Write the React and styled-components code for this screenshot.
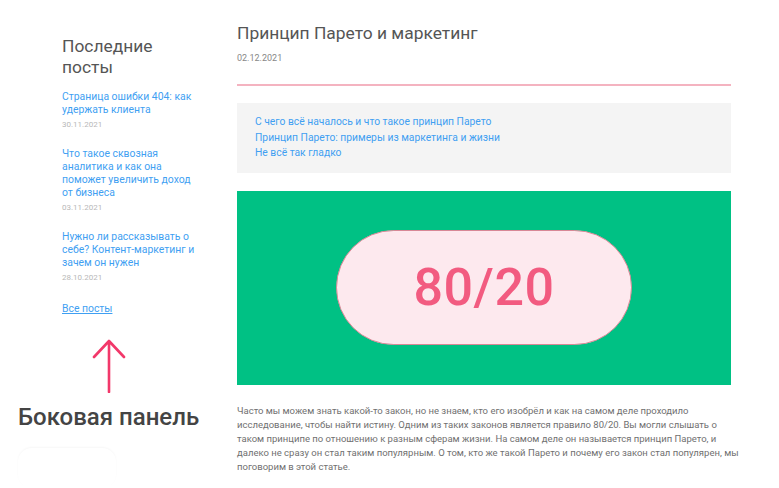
import React from "react";
import styled, { createGlobalStyle } from "styled-components";

const Global = createGlobalStyle`
  html, body { margin: 0; padding: 0; background: #fff; }
  body { font-family: Roboto, "Noto Sans", "Liberation Sans", sans-serif; }
  * { box-sizing: border-box; }
`;

const Page = styled.div`
  display: flex;
  width: 779px;
  height: 488px;
  overflow: hidden;
`;

const LeftColumn = styled.aside`
  width: 237px;
  flex-shrink: 0;
  display: flex;
  flex-direction: column;
`;

const Widget = styled.div`
  margin-left: 62px;
  width: 139px;
  padding-top: 36px;
  display: flex;
  flex-direction: column;
`;

const WidgetTitle = styled.h3`
  margin: 0 0 12px;
  font-size: 17.4px;
  line-height: 21px;
  font-weight: 400;
  color: #555;
`;

const PostList = styled.ul`
  list-style: none;
  margin: 0;
  padding: 0;
  display: flex;
  flex-direction: column;
  gap: 16px;
`;

const PostItem = styled.li`
  display: flex;
  flex-direction: column;
`;

const PostLink = styled.a`
  font-size: 10.4px;
  line-height: 13px;
  color: #3f9ff2;
  text-decoration: none;
`;

const PostDate = styled.span`
  margin-top: 3px;
  font-size: 8px;
  line-height: 12px;
  color: #b8b8b8;
`;

const AllPosts = styled.a`
  margin-top: 18px;
  font-size: 10.4px;
  line-height: 13px;
  color: #3f9ff2;
  text-decoration: underline;
`;

const Annotation = styled.div`
  margin-top: 24px;
  display: flex;
  flex-direction: column;
  padding-left: 18px;
`;

const ArrowIcon = styled.svg`
  margin-left: 74px;
  display: block;
`;

const AnnotationLabel = styled.div`
  margin-top: 10px;
  font-size: 24px;
  line-height: 28px;
  font-weight: 500;
  color: #444;
  white-space: nowrap;
`;

const FaintCard = styled.div`
  margin-top: 17px;
  width: 98px;
  height: 40px;
  border-radius: 14px;
  box-shadow: 0 -1px 2px rgba(0, 0, 0, 0.035);
`;

const Main = styled.main`
  width: 494px;
  padding-top: 21px;
  display: flex;
  flex-direction: column;
`;

const ArticleTitle = styled.h1`
  margin: 0;
  font-size: 17.4px;
  line-height: 24px;
  font-weight: 400;
  color: #555;
`;

const ArticleDate = styled.div`
  margin-top: 7px;
  font-size: 9px;
  line-height: 12px;
  color: #888;
`;

const Divider = styled.hr`
  margin: 20px 0 0;
  border: none;
  height: 2px;
  background: #f4b3c0;
`;

const Toc = styled.nav`
  margin-top: 17px;
  background: #f4f4f4;
  padding: 11px 18px 12px;
  display: flex;
  flex-direction: column;
`;

const TocLink = styled.a`
  font-size: 10.3px;
  line-height: 15.5px;
  color: #3f9ff2;
  text-decoration: none;
`;

const Banner = styled.div`
  margin-top: 18px;
  height: 194px;
  background: #00c184;
  display: flex;
  align-items: center;
  justify-content: center;
`;

const Pill = styled.div`
  width: 296px;
  height: 115px;
  border-radius: 58px;
  background: #fde9ee;
  border: 1px solid #d88896;
  display: flex;
  align-items: center;
  justify-content: center;
  font-size: 52px;
  font-weight: 500;
  color: #f25b80;
  letter-spacing: 0.5px;
`;

const Paragraph = styled.p`
  margin: 19px 0 0;
  font-size: 9.5px;
  line-height: 14px;
  color: #707070;
  white-space: nowrap;
`;

const posts = [
  { title: "Страница ошибки 404: как удержать клиента", date: "30.11.2021" },
  {
    title: "Что такое сквозная аналитика и как она поможет увеличить доход от бизнеса",
    date: "03.11.2021",
  },
  {
    title: "Нужно ли рассказывать о себе? Контент-маркетинг и зачем он нужен",
    date: "28.10.2021",
  },
];

const toc = [
  "С чего всё началось и что такое принцип Парето",
  "Принцип Парето: примеры из маркетинга и жизни",
  "Не всё так гладко",
];

const paragraphLines = [
  "Часто мы можем знать какой-то закон, но не знаем, кто его изобрёл и как на самом деле проходило",
  "исследование, чтобы найти истину. Одним из таких законов является правило 80/20. Вы могли слышать о",
  "таком принципе по отношению к разным сферам жизни. На самом деле он называется принцип Парето, и",
  "далеко не сразу он стал таким популярным. О том, кто же такой Парето и почему его закон стал популярен, мы",
  "поговорим в этой статье.",
];

export default function App() {
  return (
    <>
      <Global />
      <Page>
        <LeftColumn>
          <Widget>
            <WidgetTitle>
              Последние
              <br />
              посты
            </WidgetTitle>
            <PostList>
              {posts.map((p) => (
                <PostItem key={p.date}>
                  <PostLink href="#">{p.title}</PostLink>
                  <PostDate>{p.date}</PostDate>
                </PostItem>
              ))}
            </PostList>
            <AllPosts href="#">Все посты</AllPosts>
          </Widget>
          <Annotation>
            <ArrowIcon width="34" height="54" viewBox="0 0 34 54">
              <path
                d="M17 2 L17 53 M2 18 L17 2 L32 18"
                fill="none"
                stroke="#f2386a"
                strokeWidth="2.6"
                strokeLinecap="round"
                strokeLinejoin="round"
              />
            </ArrowIcon>
            <AnnotationLabel>Боковая панель</AnnotationLabel>
            <FaintCard />
          </Annotation>
        </LeftColumn>
        <Main>
          <ArticleTitle>Принцип Парето и маркетинг</ArticleTitle>
          <ArticleDate>02.12.2021</ArticleDate>
          <Divider />
          <Toc>
            {toc.map((t) => (
              <TocLink key={t} href="#">
                {t}
              </TocLink>
            ))}
          </Toc>
          <Banner>
            <Pill>80/20</Pill>
          </Banner>
          <Paragraph>
            {paragraphLines.map((line, i) => (
              <React.Fragment key={i}>
                {line}
                {i < paragraphLines.length - 1 && <br />}
              </React.Fragment>
            ))}
          </Paragraph>
        </Main>
      </Page>
    </>
  );
}
